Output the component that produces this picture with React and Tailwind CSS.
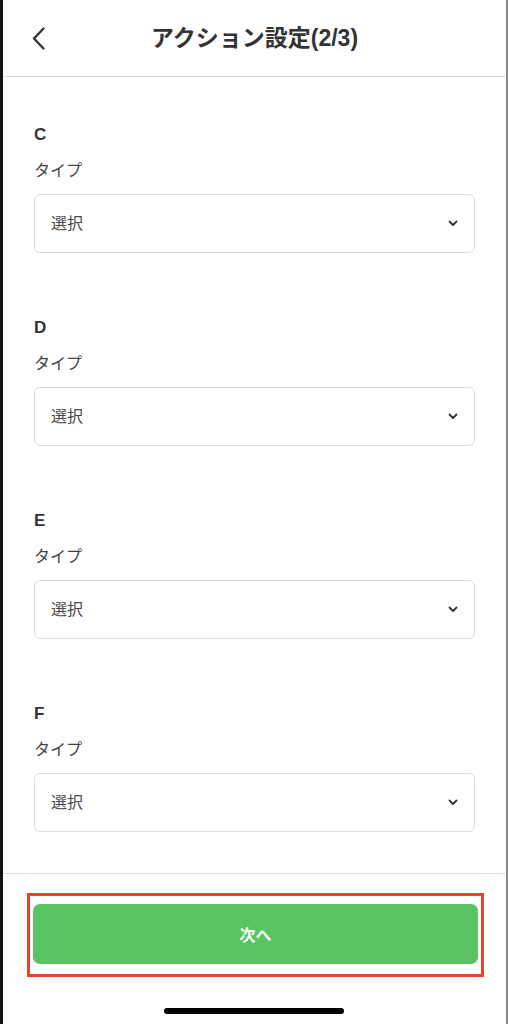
import React from 'react';

const font = { fontFamily: '"Liberation Sans", "Noto Sans CJK JP", sans-serif' };

const sections = ['C', 'D', 'E', 'F'];

function SelectBox() {
  return (
    <div className="mt-[11px] h-[59px] rounded-[6px] border border-[#dcdcdc] flex items-center justify-between pl-[16px] pr-[16px]">
      <span className="text-[16px] text-[#4a4a4a]">選択</span>
      <svg width="10" height="7" viewBox="0 0 10 7" fill="none">
        <path d="M1.5 1.5 L5 5 L8.5 1.5" stroke="#333" strokeWidth="1.8" strokeLinecap="round" strokeLinejoin="round" />
      </svg>
    </div>
  );
}

export default function App() {
  return (
    <div
      style={font}
      className="w-[508px] h-[1024px] bg-white flex flex-col border-l-[3px] border-l-[#111] border-r-[2px] border-r-[#8a8a8a] overflow-hidden"
    >
      {/* header */}
      <div className="relative h-[77px] border-b border-[#dedede] flex items-center justify-center shrink-0">
        <svg className="absolute left-[29px] top-[27px]" width="14" height="23" viewBox="0 0 14 23" fill="none">
          <path d="M11.5 1.5 L2 11.5 L11.5 21.5" stroke="#333" strokeWidth="2.4" strokeLinecap="round" strokeLinejoin="round" />
        </svg>
        <h1 className="text-[23px] font-bold text-[#333]">アクション設定(2/3)</h1>
      </div>

      {/* form */}
      <div className="flex-1 px-[31px] pt-[46px]">
        {sections.map((s, i) => (
          <div key={s} className={i === 0 ? '' : 'mt-[63px]'}>
            <div className="h-[24px] leading-[24px] text-[17px] font-bold text-[#333]">{s}</div>
            <div className="mt-[12px] h-[24px] leading-[24px] text-[16px] text-[#444]">タイプ</div>
            <SelectBox />
          </div>
        ))}
      </div>

      {/* footer */}
      <div className="h-[151px] border-t border-[#dedede] shrink-0 flex flex-col items-center">
        <div className="mt-[19px] w-[457px] ml-[2px] h-[84px] border-[3px] border-[#e8432b] px-[3px] pt-[8px]">
          <button className="w-full h-[60px] rounded-[7px] bg-[#5ac463] text-white text-[16px] font-bold pt-[4px]">
            次へ
          </button>
        </div>
        <div className="mt-[31px] w-[180px] h-[6px] rounded-full bg-black ml-[-1px]" />
      </div>
    </div>
  );
}
